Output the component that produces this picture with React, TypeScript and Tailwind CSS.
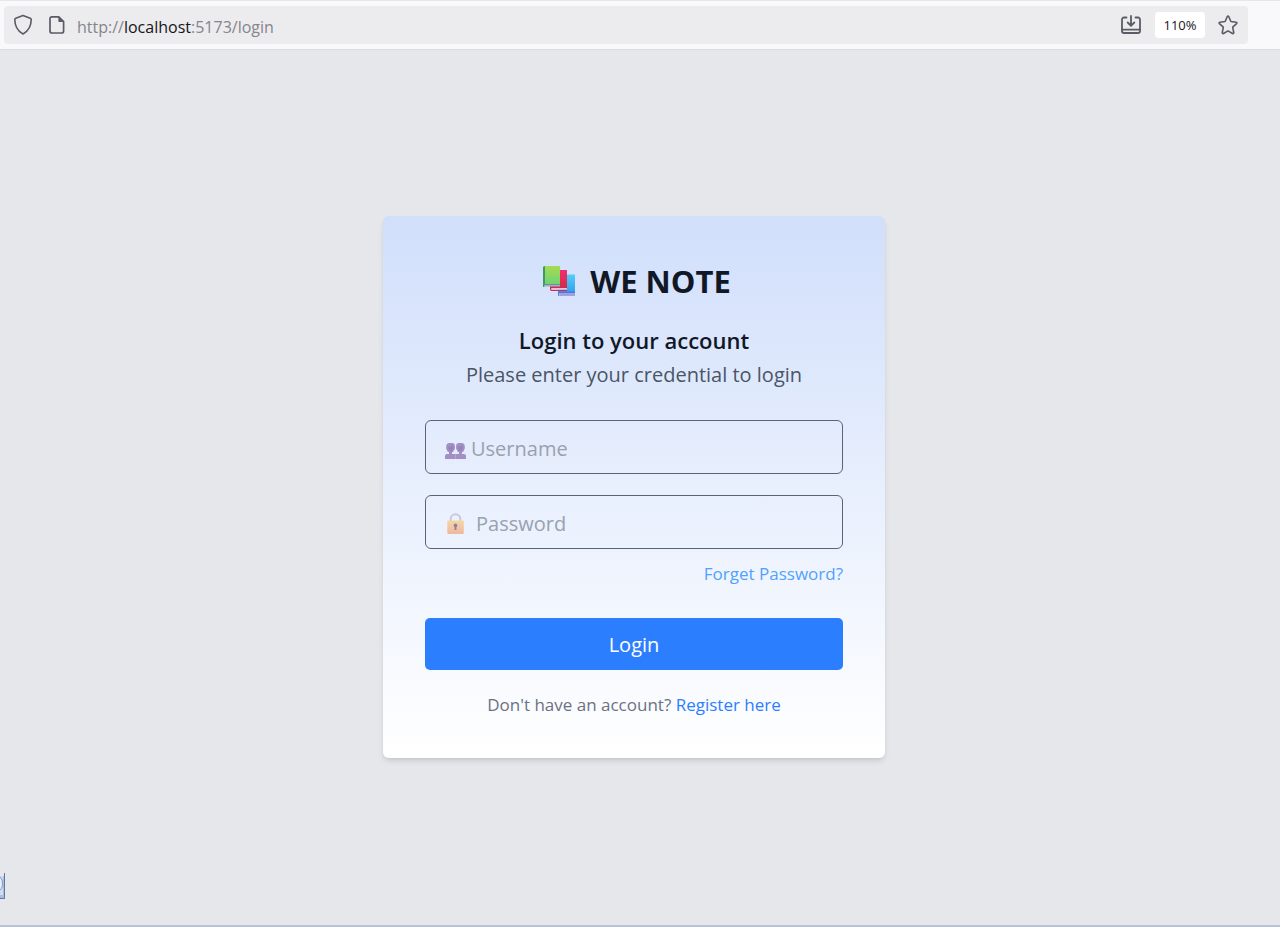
import { useState } from "react";

function ShieldIcon() {
  return (
    <svg width="20" height="22" viewBox="0 0 20 22" fill="none" stroke="#5b5b66" strokeWidth="1.6" strokeLinejoin="round" aria-hidden="true">
      <path d="M10 1.6 17.2 4.3Q18.2 4.7 18.2 5.8C18.2 12.4 15.5 16.9 10 20C4.5 16.9 1.8 12.4 1.8 5.8Q1.8 4.7 2.8 4.3Z" />
    </svg>
  );
}

function PageIcon() {
  return (
    <svg width="16" height="20" viewBox="0 0 16 20" aria-hidden="true">
      <path d="M3 1.9H9.8L14.6 6.7V16A2 2 0 0 1 12.6 18H3A2 2 0 0 1 1 16V3.9A2 2 0 0 1 3 1.9Z" fill="none" stroke="#5b5b66" strokeWidth="1.7" strokeLinejoin="round" />
      <path d="M9.4 1.5 15 7.1H10.6A1.2 1.2 0 0 1 9.4 5.9Z" fill="#5b5b66" />
    </svg>
  );
}

function InstallIcon() {
  return (
    <svg width="20" height="20" viewBox="0 0 20 20" fill="none" stroke="#5b5b66" strokeWidth="1.8" strokeLinecap="round" strokeLinejoin="round" aria-hidden="true">
      <path d="M5.5 2.5H3A2 2 0 0 0 1 4.5V16A2 2 0 0 0 3 18H17A2 2 0 0 0 19 16V4.5A2 2 0 0 0 17 2.5H14.5" />
      <path d="M1 14.7H19M10 .9V10.5M6.7 7.5 10 10.8 13.3 7.5" />
    </svg>
  );
}

function StarIcon() {
  return (
    <svg width="20" height="20" viewBox="0 0 20 20" fill="none" stroke="#5b5b66" strokeWidth="1.6" strokeLinejoin="round" aria-hidden="true">
      <path d="M9.2 1.7Q10 .3 10.8 1.7L12.9 6.5 18.2 7.2Q19.5 7.5 18.6 8.6L14.7 12.2 15.7 17.5Q15.8 19 14.5 18.5L10 15.9 5.5 18.5Q4.2 19 4.3 17.5L5.3 12.2 1.4 8.6Q.5 7.5 1.8 7.2L7.1 6.5Z" />
    </svg>
  );
}

function BooksLogo() {
  return (
    <svg width="32" height="32" viewBox="0 0 32 32" aria-hidden="true">
      <defs>
        <linearGradient id="green" x1="0" y1="0" x2="0" y2="1">
          <stop offset="0" stopColor="#a6dc50" />
          <stop offset="1" stopColor="#70d275" />
        </linearGradient>
        <linearGradient id="red" x1="0" y1="0" x2="0" y2="1">
          <stop offset="0" stopColor="#f02e70" />
          <stop offset="1" stopColor="#d52b48" />
        </linearGradient>
        <linearGradient id="blue" x1="0" y1="0" x2="0" y2="1">
          <stop offset="0" stopColor="#52cdf8" />
          <stop offset="1" stopColor="#35a0ef" />
        </linearGradient>
      </defs>
      <path d="M16 9.5H32V27.5H15Z" fill="url(#blue)" />
      <path d="M15.5 26.5H32V28.5H16V30.5H32V31H16Q15 31 15 29.5V27Z" fill="#467bdf" />
      <path d="M16.5 28.5H32V30.7H16.5Z" fill="#a69bdc" />
      <path d="M8 5H24V22.5H7Z" fill="url(#red)" />
      <path d="M7 22H24V23H8.5V24.8H24V26H8.5Q7 26 7 24Z" fill="#c92b5d" />
      <path d="M8.5 23H24V24.8H8.5Z" fill="#edbdd9" />
      <path d="M1 1H17V19H0V2Q0 1 1 1Z" fill="url(#green)" />
      <path d="M0 2 2 1V19H17V20H1.5V22H0Z" fill="#3f9868" />
      <path d="M1.5 19.7H17V21.5H1.5Z" fill="#a8abc8" />
    </svg>
  );
}

function PeopleIcon() {
  return (
    <svg width="21" height="24" viewBox="0 -7 21 24" className="shrink-0" aria-hidden="true">
      <g fill="#a18fc6">
        <path d="M0 17V14Q0 12 2 12H4V10.300Q1.800 9.500 1.600 7.200Q.7 6 1.300 4.800V3.500Q1.500 1 4 1H7.500Q9.800 1 9.900 3.500V5Q10.400 6.500 9.400 7.500Q9 9.700 7 10.500V12H10.500V17Z" />
        <path d="M10.500 17V12H14V10.500Q12 9.700 11.600 7.500Q10.600 6.500 11.100 5V3.500Q11.200 1 13.500 1H17Q19.500 1 19.700 3.500V4.800Q20.300 6 19.400 7.200Q19.200 9.500 17 10.300V12H19Q21 12 21 14V17Z" />
      </g>
      <path d="M3 5Q6 4.700 7.500 3.500L8.500 5.500Q8 8.500 5.600 9.600 3.500 8.500 3 5ZM12.700 5Q15.500 4.700 17 3.500L18 5.500Q17.500 8.500 15.400 9.600 13 8.500 12.700 5Z" fill="#9484b9" />
    </svg>
  );
}

function LockIcon() {
  return (
    <svg width="21" height="26" viewBox="0 -4 21 26" className="shrink-0" aria-hidden="true">
      <defs>
        <linearGradient id="lock" x1="0" y1="0" x2="0" y2="1">
          <stop offset="0" stopColor="#f6d6a1" />
          <stop offset="1" stopColor="#f0b6a2" />
        </linearGradient>
      </defs>
      <path d="M5.700 9V6A4.800 4.800 0 0 1 15.300 6V9" fill="none" stroke="#c8cadb" strokeWidth="2" />
      <rect x="2.300" y="7.500" width="16.500" height="13.500" rx="1" fill="url(#lock)" />
      <path d="M10.500 10.500A2 2 0 0 0 9.600 14.200V17H11.400V14.200A2 2 0 0 0 10.500 10.500Z" fill="#8c819c" />
    </svg>
  );
}

function BrowserBar() {
  return (
    <header className="flex h-[50px] shrink-0 items-center border-y border-t-[#e6e6eb] border-b-[#dcdce0] bg-[#f9f9fb] pr-8 pl-1">
      <div className="flex h-[38px] min-w-0 flex-1 items-center rounded bg-[#ececee] pr-[10px] pl-[9px]">
        <ShieldIcon />
        <span className="ml-4">
          <PageIcon />
        </span>
        <span className="ml-3 flex-1 truncate pt-1 text-base text-[#85858c]">
          http://<span className="text-[#15141a]">localhost</span>:5173/login
        </span>
        <button type="button" aria-label="Install page">
          <InstallIcon />
        </button>
        <button type="button" className="ml-[14px] h-[26px] w-[50px] rounded bg-white pt-0.5 text-[13px] text-[#15141a]">
          110%
        </button>
        <button type="button" aria-label="Bookmark this page" className="ml-[13px]">
          <StarIcon />
        </button>
      </div>
    </header>
  );
}

const fieldClass =
  "flex h-[54px] items-center rounded-md border border-[#5b6474] px-[19px] focus-within:border-[#2b7fff]";
const inputClass =
  "min-w-0 flex-1 bg-transparent pt-1 text-xl text-[#1e2939] outline-none placeholder:text-[#99a1af]";

export default function App() {
  const [username, setUsername] = useState("");
  const [password, setPassword] = useState("");

  return (
    <div className="flex min-h-screen flex-col bg-[#e5e7eb] font-['Open_Sans','Noto_Sans',sans-serif]">
      <BrowserBar />
      <main className="relative flex flex-1 items-center justify-center border-b-2 border-[#b5c2d8] pr-3 pb-0.5">
        <form
          onSubmit={(e) => e.preventDefault()}
          className="w-full max-w-[502px] rounded-md bg-linear-to-b from-[#d1dffb] to-white px-[42px] pt-[42px] pb-10 shadow-md"
        >
          <h1 className="flex items-center justify-center gap-[15px] pl-[6px] text-[31px] leading-[46px] font-bold text-[#101828]">
            <BooksLogo />
            WE NOTE
          </h1>
          <h2 className="mt-[19px] text-center text-[22px] leading-[34px] font-semibold text-[#101828]">
            Login to your account
          </h2>
          <p className="text-center text-xl leading-9 text-[#4a5565]">
            Please enter your credential to login
          </p>
          <label className={`${fieldClass} mt-[27px]`}>
            <PeopleIcon />
            <input
              aria-label="Username"
              placeholder="Username"
              value={username}
              onChange={(e) => setUsername(e.target.value)}
              className={`${inputClass} ml-[5px]`}
            />
          </label>
          <label className={`${fieldClass} mt-[21px]`}>
            <LockIcon />
            <input
              type="password"
              aria-label="Password"
              placeholder="Password"
              value={password}
              onChange={(e) => setPassword(e.target.value)}
              className={`${inputClass} ml-[10px]`}
            />
          </label>
          <div className="mt-[11px] text-right text-[17px] leading-7">
            <a href="#forgot" className="text-[#51a2ff]">
              Forget Password?
            </a>
          </div>
          <button type="submit" className="mt-[30px] h-[52px] w-full rounded-[5px] bg-[#2b7fff] pt-0.5 text-xl text-white">
            Login
          </button>
          <p className="mt-[22px] text-center text-[17px] leading-[26px] text-[#6a7282]">
            Don't have an account?{" "}
            <a href="#register" className="text-[#2b7fff]">
              Register here
            </a>
          </p>
        </form>
        <svg width="5" height="26" viewBox="0 0 5 26" className="absolute bottom-[26px] left-0" aria-hidden="true">
          <rect width="5" height="26" fill="#a9bddd" />
          <path d="M0 0H4V3H0Z" fill="#e5e7eb" />
          <path d="M0 3H3V22H0Z" fill="#d0ddf0" />
          <path d="M0 4Q3 6 2.5 12Q2 16 0 17" fill="#e7effa" stroke="#7898cb" />
          <path d="M4.5 0V25.5H0" fill="none" stroke="#60789f" />
        </svg>
      </main>
    </div>
  );
}
